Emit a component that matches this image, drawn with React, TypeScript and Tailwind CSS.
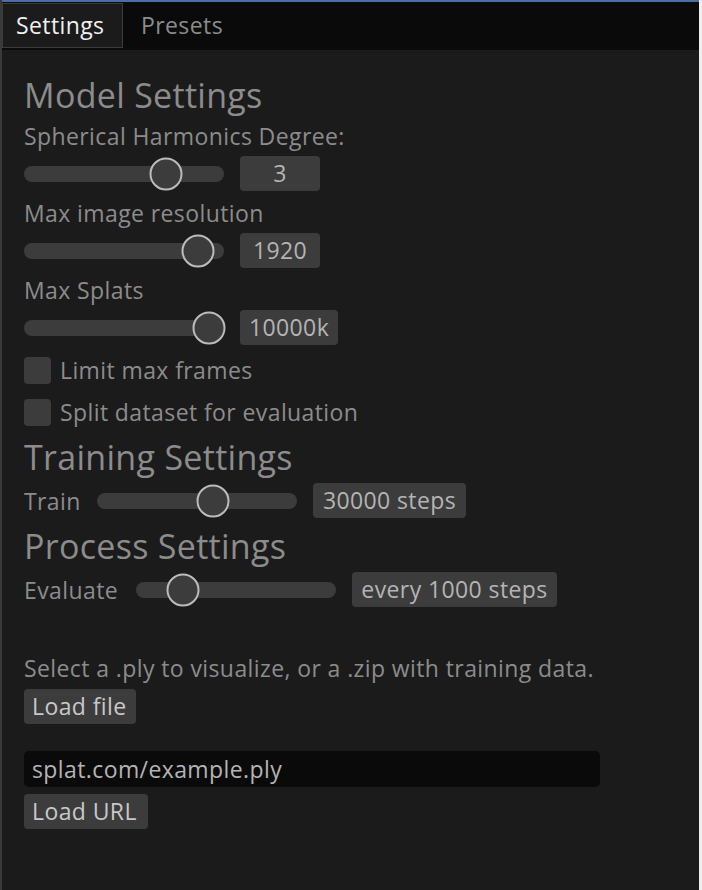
export default function App() {
  return (
    <div className="w-[702px] h-[890px] flex bg-[#1b1b1b] overflow-hidden" style={{ fontFamily: '"Open Sans", "Noto Sans", sans-serif' }}>
      <div className="w-[2px] bg-[#3a3a3a] shrink-0" />
      <div className="flex-1 flex flex-col">
        <div className="h-[2px] bg-[#4a6ea5]" />
        {/* tab bar */}
        <div className="h-[48px] bg-[#0a0a0a] flex items-start pt-[1px] text-[23px] tracking-[0.4px]">
          <div className="h-[45px] w-[121px] border border-[#3c3c3c] bg-[#1b1b1b] flex items-center pl-[13px] text-[#f0f0f0]">
            Settings
          </div>
          <div className="h-[45px] flex items-center pl-[18px] text-[#8c8c8c]">Presets</div>
        </div>

        <div className="flex flex-col pl-[22px] text-[23px] tracking-[0.4px] text-[#8c8c8c]">
          <Heading className="mt-[24px]">Model Settings</Heading>
          <Label className="mt-[5px]">Spherical Harmonics Degree:</Label>
          <SliderRow className="mt-[5px]" knob={142} value="3" box={80} />
          <Label className="mt-[7px]">Max image resolution</Label>
          <SliderRow className="mt-[5px]" knob={174} value="1920" box={80} />
          <Label className="mt-[7px]">Max Splats</Label>
          <SliderRow className="mt-[5px]" knob={185} value="10000k" box={98} />
          <Check className="mt-[10px]" label="Limit max frames" />
          <Check className="mt-[12px]" label="Split dataset for evaluation" />
          <Heading className="mt-[9px]">Training Settings</Heading>
          <div className="mt-[5px] flex items-center">
            <div className="w-[73px] leading-[30px]">Train</div>
            <SliderRow knob={116} value="30000 steps" box={153} />
          </div>
          <Heading className="mt-[7px]">Process Settings</Heading>
          <div className="mt-[5px] flex items-center">
            <div className="w-[112px] leading-[30px]">Evaluate</div>
            <SliderRow knob={47} value="every 1000 steps" box={205} />
          </div>
          <Label className="mt-[46px]">Select a .ply to visualize, or a .zip with training data.</Label>
          <Button className="mt-[6px]" width={112}>Load file</Button>
          <div className="mt-[27px] w-[576px] h-[36px] rounded-[5px] bg-[#0a0a0a] flex items-center pl-[8px] text-[#b4b4b4]">
            splat.com/example.ply
          </div>
          <Button className="mt-[7px]" width={124}>Load URL</Button>
        </div>
      </div>
      <div className="w-[3px] bg-[#efefef] shrink-0" />
    </div>
  );
}

function Heading({ children, className = "" }: { children: React.ReactNode; className?: string }) {
  return <div className={`h-[42px] leading-[42px] text-[34px] tracking-[0.3px] text-[#8c8c8c] ${className}`}>{children}</div>;
}

function Label({ children, className = "" }: { children: React.ReactNode; className?: string }) {
  return <div className={`h-[30px] leading-[30px] whitespace-nowrap ${className}`}>{children}</div>;
}

function SliderRow({ knob, value, box, className = "" }: { knob: number; value: string; box: number; className?: string }) {
  return (
    <div className={`flex items-center h-[35px] ${className}`}>
      <div className="relative w-[200px] h-[16px] rounded-full bg-[#3c3c3c]">
        <div
          className="absolute top-1/2 w-[33px] h-[33px] -translate-x-1/2 -translate-y-1/2 rounded-full border-2 border-[#bcbcbc] bg-[#3c3c3c]"
          style={{ left: knob }}
        />
      </div>
      <div
        className="ml-[16px] h-[35px] rounded-[4px] bg-[#3c3c3c] flex items-center justify-center text-[#b4b4b4] whitespace-nowrap"
        style={{ width: box }}
      >
        {value}
      </div>
    </div>
  );
}

function Check({ label, className = "" }: { label: string; className?: string }) {
  return (
    <div className={`flex items-center h-[30px] ${className}`}>
      <div className="w-[27px] h-[27px] rounded-[4px] bg-[#3c3c3c]" />
      <span className="ml-[9px] whitespace-nowrap">{label}</span>
    </div>
  );
}

function Button({ children, width, className = "" }: { children: React.ReactNode; width: number; className?: string }) {
  return (
    <div
      className={`h-[35px] rounded-[4px] bg-[#3c3c3c] flex items-center pl-[8px] text-[#c8c8c8] whitespace-nowrap ${className}`}
      style={{ width }}
    >
      {children}
    </div>
  );
}
